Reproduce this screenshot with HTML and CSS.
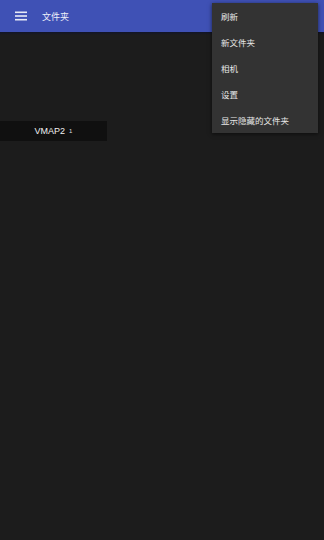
FILE: index.html
```html
<!DOCTYPE html>
<html>
<head>
<meta charset="utf-8">
<link rel="stylesheet" href="styles.css">
</head>
<body>
<div class="app">
  <header class="toolbar">
    <span class="menu-icon">
      <svg width="12" height="10" viewBox="0 0 12 10"><rect x="0" y="0.5" width="12" height="1.6" fill="#e8eaf6"/><rect x="0" y="4.2" width="12" height="1.6" fill="#e8eaf6"/><rect x="0" y="7.9" width="12" height="1.6" fill="#e8eaf6"/></svg>
    </span>
    <span class="title">文件夹</span>
  </header>
  <div class="shadow"></div>
  <main class="content">
    <div class="folder"><span class="name">VMAP2</span><span class="count">1</span></div>
  </main>
  <ul class="popup">
    <li>刷新</li>
    <li>新文件夹</li>
    <li>相机</li>
    <li>设置</li>
    <li>显示隐藏的文件夹</li>
  </ul>
</div>
</body>
</html>
```
FILE: styles.css
```css
* { box-sizing: border-box; margin: 0; padding: 0; }
html, body { width: 324px; height: 540px; background: #1c1c1c; overflow: hidden; }
body { font-family: "Noto Sans CJK SC", "Noto Sans", sans-serif; color: #e6e6e6; }
.app { position: relative; width: 324px; height: 540px; display: flex; flex-direction: column; }
.toolbar { height: 32px; background: #3f51b5; display: flex; align-items: center; padding-left: 15px; }
.menu-icon { display: flex; width: 12px; height: 10px; margin-right: 15px; }
.title { font-size: 9px; color: #eef0fa; }
.shadow { height: 3px; background: linear-gradient(#111428, #1c1c1c); }
.content { flex: 1; padding-top: 86px; }
.folder { width: 107px; height: 20px; background: #101010; display: flex; align-items: center; justify-content: center; gap: 4px; }
.folder .name { font-size: 9px; color: #f0f0f0; font-family: "Liberation Sans", sans-serif; }
.folder .count { font-size: 6px; color: #ddd; font-family: "Liberation Sans", sans-serif; }
.popup { position: absolute; left: 212px; top: 3px; width: 106px; list-style: none; background: #333333; box-shadow: 0 1px 4px rgba(0,0,0,0.6); padding: 0; display: flex; flex-direction: column; padding-top: 0; padding-bottom: 0; height: 130px; }
.popup li { height: 26px; display: flex; align-items: center; padding-left: 9px; font-size: 8.5px; color: #e8e8e8; }
```
